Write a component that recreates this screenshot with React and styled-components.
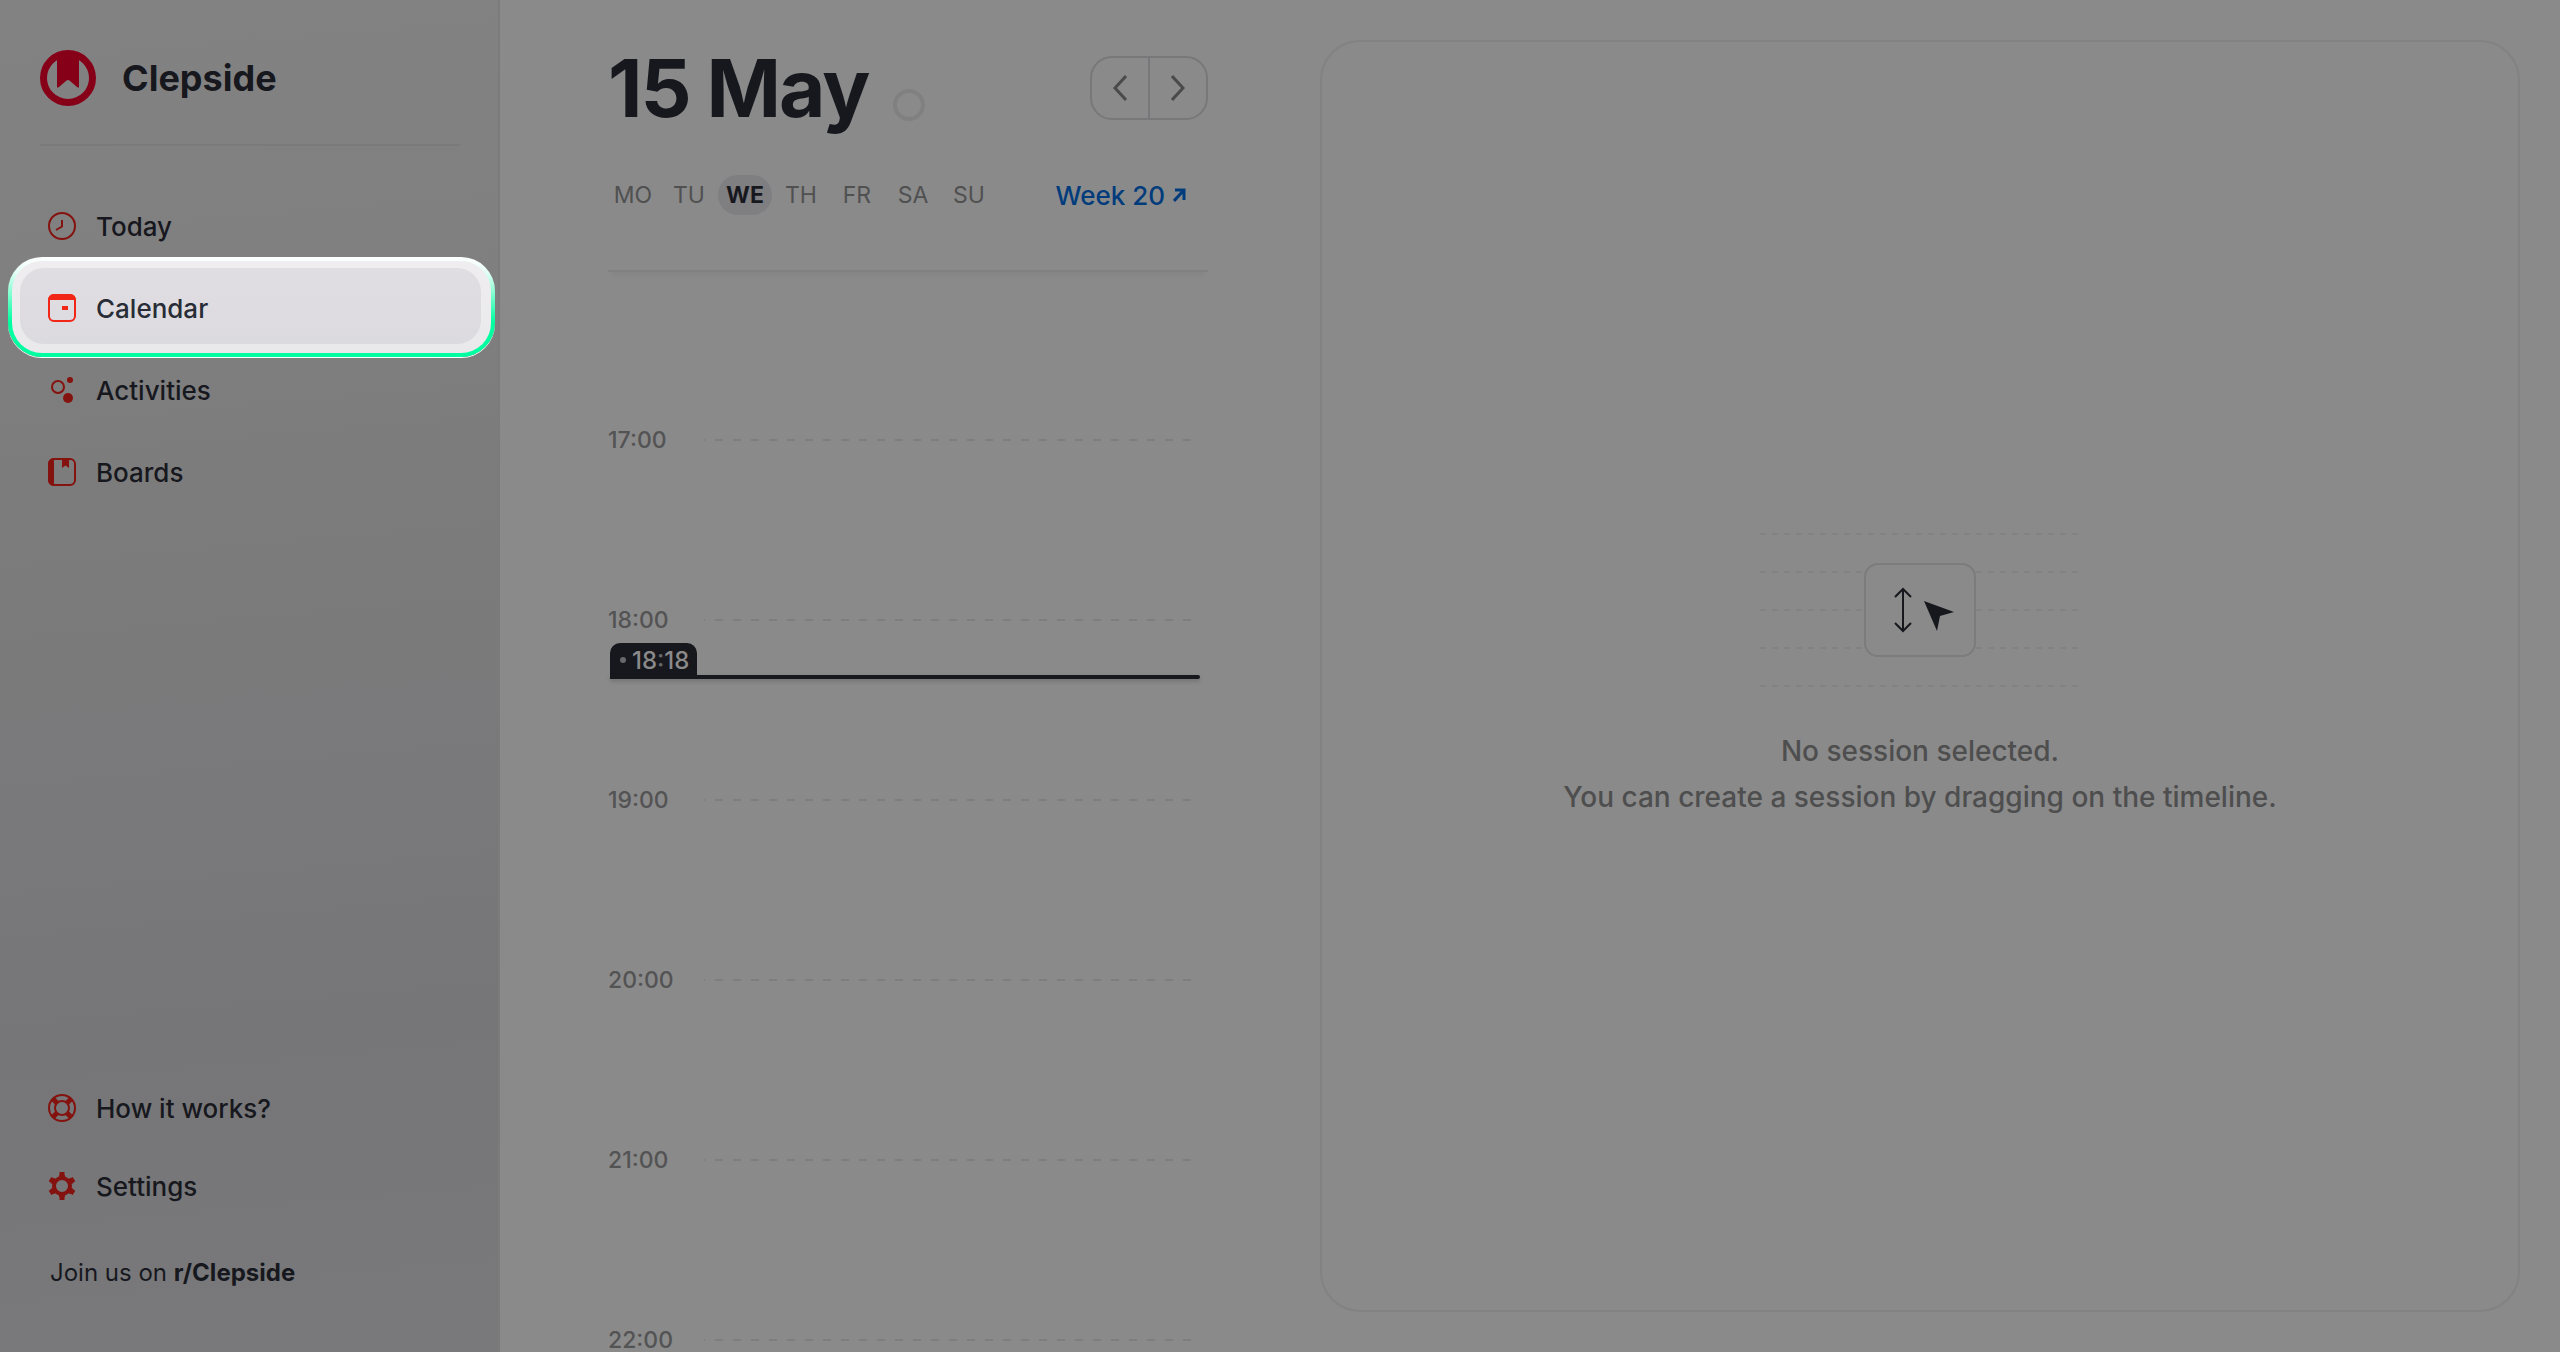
import React from "react";
import styled, { createGlobalStyle } from "styled-components";

const days = ["MO", "TU", "WE", "TH", "FR", "SA", "SU"];
const hours = ["17:00", "18:00", "19:00", "20:00", "21:00", "22:00"];

const icons = {
  today: (
    <>
      <circle cx="14" cy="14" r="13" fill="none" stroke="currentColor" strokeWidth="2" />
      <path d="M14 8v6.500L8 18" fill="none" stroke="currentColor" strokeWidth="2" />
    </>
  ),
  calendar: (
    <>
      <rect x="1" y="1" width="26" height="26" rx="5" fill="none" stroke="currentColor" strokeWidth="2" />
      <path d="M0 6a6 6 0 0 1 6-6h16a6 6 0 0 1 6 6z" fill="currentColor" />
      <rect x="14" y="12" width="6" height="4" fill="currentColor" />
    </>
  ),
  activities: (
    <>
      <circle cx="10" cy="11" r="6" fill="none" stroke="currentColor" strokeWidth="2" />
      <circle cx="22" cy="4" r="3" fill="currentColor" />
      <circle cx="20" cy="22" r="5" fill="currentColor" />
    </>
  ),
  boards: (
    <>
      <rect x="1" y="1" width="26" height="26" rx="5" fill="none" stroke="currentColor" strokeWidth="2" />
      <path d="M6 0v28a6 6 0 0 1-6-6V6a6 6 0 0 1 6-6zM14 1h7v9l-3.500-2.500L14 10z" fill="currentColor" />
    </>
  ),
  help: (
    <>
      <g fill="none" stroke="currentColor" strokeWidth="2">
        <circle cx="14" cy="14" r="13" />
        <circle cx="14" cy="14" r="7" />
      </g>
      <path d="M5 5l4 4M23 5l-4 4M5 23l4-4M23 23l-4-4" stroke="currentColor" strokeWidth="5" />
    </>
  ),
  settings: (
    <g fill="none" stroke="currentColor" strokeLinejoin="round">
      <circle cx="14" cy="14" r="8" strokeWidth="4" />
      <path d="M14 6V3M14 22v3M7 10L4 8.300M21 10l3-1.700M7 18l-3 1.700M21 18l3 1.700" strokeWidth="6" />
      <path d="M14 4V0M14 24v4M5 9L2 7.200M23 9l3-1.800M5 19l-3 1.800M23 19l3 1.800" strokeWidth="5" />
    </g>
  ),
};

function NavItem({ icon, children, active, tall }) {
  return (
    <NavLink href="#" aria-current={active ? "page" : undefined} $active={active} $tall={tall}>
      <Icon viewBox="0 0 28 28">{icons[icon]}</Icon>
      {children}
    </NavLink>
  );
}

export default function App() {
  return (
    <Page>
      <GlobalStyle />
      <Sidebar>
        <Brand>
          <Logo viewBox="0 0 56 56">
            <circle cx="28" cy="28" r="24.500" fill="none" stroke="#860018" strokeWidth="7" />
            <path d="M17 5h22v31q0 3-2 1l-7-6q-2-2-4 0l-7 6q-2 2-2-1z" fill="#860018" />
          </Logo>
          <span>Clepside</span>
        </Brand>
        <Nav>
          <NavItem icon="today" tall>Today</NavItem>
          <Spotlight>
            <NavItem icon="calendar" active>Calendar</NavItem>
          </Spotlight>
          <NavItem icon="activities" tall>Activities</NavItem>
          <NavItem icon="boards" tall>Boards</NavItem>
        </Nav>
        <Footer>
          <NavItem icon="help">How it works?</NavItem>
          <NavItem icon="settings">Settings</NavItem>
          <Join>
            Join us on <a href="#">r/Clepside</a>
          </Join>
        </Footer>
      </Sidebar>

      <Day>
        <DayHeader>
          <h1>15 May</h1>
          <Ring />
          <Pager>
            <button aria-label="Previous day">
              <svg width="14" height="28" viewBox="0 0 14 28">
                <path d="M13 2L2 14l11 12" />
              </svg>
            </button>
            <button aria-label="Next day">
              <svg width="14" height="28" viewBox="0 0 14 28">
                <path d="M1 2l11 12L1 26" />
              </svg>
            </button>
          </Pager>
        </DayHeader>
        <WeekRow>
          <DayList>
            {days.map((day) => (
              <DayButton key={day} $current={day === "WE"}>{day}</DayButton>
            ))}
          </DayList>
          <WeekLink href="#">
            Week 20
            <svg width="13" height="14" viewBox="0 0 13 14">
              <path d="M2 2h9v10M11 2L1 13" fill="none" stroke="currentColor" strokeWidth="3" />
            </svg>
          </WeekLink>
        </WeekRow>
        <Timeline>
          {hours.map((hour) => (
            <Hour key={hour}>
              <time>{hour}</time>
              <Dashes>
                <line x1="0" y1="1" x2="100%" y2="1" />
              </Dashes>
            </Hour>
          ))}
          <Now>
            <NowLabel>
              <i />
              <time>18<b>:</b>18</time>
            </NowLabel>
            <NowLine />
          </Now>
        </Timeline>
      </Day>

      <Session>
        <Sketch viewBox="0 0 320 160">
          <path d="M0 4h320M0 42h320M0 80h320M0 118h320M0 156h320" stroke="#828282" strokeWidth="2" strokeDasharray="6 6" />
          <rect x="105" y="34" width="110" height="92" rx="13" fill="#8a8a8a" stroke="#7c7c7c" strokeWidth="2" />
          <path d="M143 59v42M135 67l8-8 8 8M135 93l8 8 8-8" fill="none" stroke="#17181e" strokeWidth="2" />
          <path d="M164 71l30 11-14 4-3 15z" fill="#17181e" />
        </Sketch>
        <p>No session selected.</p>
        <p>You can create a session by dragging on the timeline.</p>
      </Session>
    </Page>
  );
}

const GlobalStyle = createGlobalStyle`
  * {
    box-sizing: border-box;
  }

  body {
    margin: 0;
    background: #8a8a8a;
    color: #17181e;
    font-family: Inter, sans-serif;
  }

  a {
    color: inherit;
    text-decoration: none;
  }

  button {
    border: 0;
    padding: 0;
    background: none;
    font: inherit;
    color: inherit;
  }
`;

const Page = styled.div`
  display: flex;
  height: 100vh;
  overflow: hidden;
`;

const Sidebar = styled.aside`
  display: flex;
  flex-direction: column;
  flex: 0 0 500px;
  border-right: 2px solid #7b7b7c;
  background: linear-gradient(175deg, #838283 0%, #818081 20%, #7c7c7c 35%, #79797b 60%, #767678 75%, #79797b 100%);
`;

const Brand = styled.div`
  display: flex;
  align-items: center;
  gap: 26px;
  height: 146px;
  margin: 0 38px 0 40px;
  padding-top: 12px;
  border-bottom: 2px solid #7a7a7b;
  font-size: 36px;
  font-weight: 700;
`;

const Logo = styled.svg`
  width: 56px;
  height: 56px;
`;

const Nav = styled.nav`
  display: flex;
  flex-direction: column;
  gap: 2px;
  padding: 40px 3px 0 8px;
`;

const NavLink = styled.a`
  display: flex;
  align-items: center;
  gap: 20px;
  height: ${(props) => (props.$tall ? "80px" : props.$active ? "76px" : "78px")};
  padding-top: ${(props) => (props.$active ? "4px" : "0")};
  padding-left: ${(props) => (props.$active ? "28px" : "40px")};
  border-radius: 24px;
  background: ${(props) => (props.$active ? "rgba(40, 35, 50, 0.07)" : "none")};
  color: ${(props) => (props.$active ? "#272c36" : "inherit")};
  font-size: 26px;
  font-weight: 500;

  svg {
    color: ${(props) => (props.$active ? "#f12617" : "#84120e")};
  }
`;

const Icon = styled.svg`
  width: 28px;
  height: 28px;
`;

const Spotlight = styled.div`
  height: 100px;
  margin: -11px 0 -9px;
  padding: 7px 10px 7px 8px;
  border: 4px solid transparent;
  border-radius: 34px;
  background:
    linear-gradient(#efedf0, #e9e9eb) padding-box,
    linear-gradient(#ffffff, #e6fff6 15%, #00ffa0 65%) border-box;
  box-shadow: 0 1px 0 #ffffff;
`;

const Footer = styled.div`
  display: flex;
  flex-direction: column;
  margin-top: auto;
  padding: 0 8px 61px;
`;

const Join = styled.p`
  margin: 30px 0 0 42px;
  font-size: 24px;
  line-height: 36px;

  a {
    font-weight: 700;
  }
`;

const Day = styled.main`
  display: flex;
  flex-direction: column;
  flex: 0 0 820px;
  padding: 40px 112px 0 108px;
`;

const DayHeader = styled.header`
  display: flex;
  align-items: center;

  h1 {
    margin: 0;
    font-size: 80px;
    line-height: 96px;
    font-weight: 700;
    letter-spacing: -2px;
  }
`;

const Ring = styled.span`
  width: 32px;
  height: 32px;
  margin: 34px 0 0 25px;
  border: 4px solid #808080;
  border-radius: 50%;
`;

const Pager = styled.div`
  display: flex;
  height: 64px;
  margin-left: auto;
  border: 2px solid #78787a;
  border-radius: 22px;

  button {
    display: flex;
    align-items: center;
    justify-content: center;
    width: 56px;
  }

  button + button {
    width: 58px;
    border-left: 2px solid #78787a;
  }

  path {
    fill: none;
    stroke: #4a4a4b;
    stroke-width: 3;
  }
`;

const WeekRow = styled.div`
  display: flex;
  flex-shrink: 0;
  align-items: center;
  height: 136px;
  padding-bottom: 16px;
  border-bottom: 2px solid #808081;
  box-shadow: 0 8px 4px -4px rgba(0, 0, 0, 0.03);
`;

const DayList = styled.div`
  display: flex;
  gap: 2px;
  margin-left: -2px;
`;

const DayButton = styled.button`
  width: 54px;
  height: 40px;
  border-radius: 20px;
  background: ${(props) => (props.$current ? "#7f7f81" : "none")};
  color: ${(props) => (props.$current ? "#17181e" : "#505051")};
  font-size: 23px;
  font-weight: ${(props) => (props.$current ? 700 : 400)};
`;

const WeekLink = styled.a`
  display: flex;
  align-items: center;
  gap: 8px;
  margin-left: auto;
  padding-right: 22px;
  color: #003c7c;
  font-size: 26px;
  font-weight: 500;
`;

const Timeline = styled.section`
  position: relative;
  flex: 1;
  padding-top: 78px;
`;

const Hour = styled.div`
  display: flex;
  align-items: center;
  height: 180px;
  color: #535354;
  font-size: 23px;
  font-weight: 500;

  time {
    width: 96px;
  }
`;

const Dashes = styled.svg`
  flex: 1;
  height: 2px;
  margin-right: 16px;

  line {
    stroke: #7e7e7e;
    stroke-width: 2;
    stroke-dasharray: 8 10;
    stroke-dashoffset: 7;
  }
`;

// sits over the hour grid at the current minute
const Now = styled.div`
  position: absolute;
  top: 371px;
  left: 2px;
  right: 8px;
`;

const NowLabel = styled.div`
  display: flex;
  align-items: center;
  gap: 6px;
  width: 87px;
  height: 32px;
  padding-top: 2px;
  padding-left: 10px;
  border-radius: 10px 10px 0 0;
  background: #17181e;
  color: #8a8a8a;
  font-size: 24px;
  font-weight: 500;

  i {
    width: 6px;
    height: 6px;
    border-radius: 50%;
    background: #69696b;
  }

  b {
    color: #69696b;
    font-weight: 500;
  }
`;

const NowLine = styled.div`
  height: 4px;
  border-radius: 0 2px 2px 0;
  background: #17181e;
  box-shadow: 0 2px 4px rgba(0, 0, 0, 0.2);
`;

const Session = styled.section`
  display: flex;
  flex: 1;
  flex-direction: column;
  align-items: center;
  justify-content: center;
  margin: 40px;
  margin-left: 0;
  padding-bottom: 2px;
  border: 2px solid #828283;
  border-radius: 40px;
  color: #4e4e4f;
  font-size: 28px;
  font-weight: 500;
  line-height: 46px;

  p {
    margin: 0;
  }
`;

const Sketch = styled.svg`
  width: 320px;
  height: 160px;
  margin-bottom: 38px;
`;
